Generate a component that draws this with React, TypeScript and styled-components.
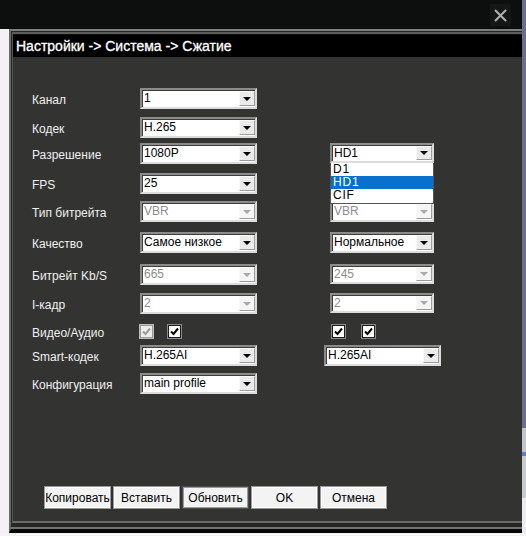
import React from "react";
import styled, { createGlobalStyle } from "styled-components";

const GlobalStyle = createGlobalStyle`
  html, body {
    margin: 0;
    padding: 0;
    background: #f3f1f4;
  }
  body {
    font-family: "Liberation Sans", Arial, sans-serif;
  }
`;

const Screen = styled.div`
  width: 526px;
  height: 536px;
  display: flex;
  flex-direction: column;
  overflow: hidden;
`;

const Upper = styled.div`
  flex: 1;
  display: flex;
  min-height: 0;
`;

const Main = styled.div`
  width: 522px;
  display: flex;
  flex-direction: column;
`;

const SideStrip = styled.div`
  width: 4px;
  background: linear-gradient(
    to bottom,
    #6d6c92 0 428px,
    #c4c4cc 428px 452px,
    #5d7fcc 452px 456px,
    #c9c9d0 456px 498px,
    #ececf0 498px
  );
`;

const BottomStrip = styled.div`
  height: 3px;
  background: #f4f4f4;
`;

const TopBar = styled.div`
  height: 29px;
  background: #0d0f0e;
  display: flex;
  justify-content: flex-end;
  align-items: flex-start;
  padding: 4px 11px 0 0;
  box-sizing: border-box;
`;

const CloseBox = styled.div`
  width: 21px;
  height: 22px;
  background: #151616;
  display: flex;
  align-items: center;
  justify-content: center;
`;

const Workspace = styled.div`
  flex: 1;
  display: flex;
`;

const LeftStrip = styled.div`
  width: 9px;
  background: #f3f1f4;
`;

const Frame = styled.div`
  flex: 1;
  display: flex;
  flex-direction: column;
  border-top: 2px solid #7d7d7d;
  border-left: 2px solid #6a6a6a;
  border-bottom: 4px solid #050505;
  padding: 1px 0 6px 1px;
  background: linear-gradient(to top, #737373 0 2px, #262626 2px);
`;

const Panel = styled.div`
  flex: 1;
  display: flex;
  flex-direction: column;
  border-top: 2px solid #5c5c5c;
  border-left: 1px solid #555;
  border-bottom: 2px solid #686868;
  padding-top: 1px;
  background: #111;
`;

const TitleBar = styled.div`
  height: 22px;
  background: #000;
  color: #fff;
  font-size: 14px;
  line-height: 22px;
  padding-left: 3px;
  white-space: nowrap;
  -webkit-text-stroke: 0.3px #fff;
`;

const Body = styled.div`
  flex: 1;
  display: flex;
  flex-direction: column;
  background: #333432;
  padding: 31px 0 12px 19px;
`;

const Form = styled.div`
  display: grid;
  grid-template-columns: 108px 117px 1fr;
  grid-template-rows: 29px 26px 30px 28px 31px 32px 29px 32px 20px 28px 21px;
  align-items: start;
`;

const Label = styled.div<{ $drop?: number }>`
  color: #efefef;
  font-size: 12px;
  line-height: 21px;
  margin-top: ${(p) => p.$drop ?? 2}px;
  white-space: nowrap;
`;

const Cell = styled.div<{ $offset?: number }>`
  position: relative;
  margin-left: ${(p) => p.$offset ?? 0}px;
`;

const SelectBox = styled.div<{ $w: number; $h?: number }>`
  width: ${(p) => p.$w}px;
  height: ${(p) => p.$h ?? 21}px;
  box-sizing: border-box;
  border: 2px solid;
  border-color: #8c8c8c #dcdcdc #dcdcdc #8c8c8c;
  box-shadow: inset 1px 1px 0 #3c3c3c;
  background: #fff;
  display: flex;
  align-items: stretch;
`;

const SelectValue = styled.span<{ $disabled?: boolean }>`
  flex: 1;
  font-size: 12px;
  line-height: 17px;
  padding-left: 2px;
  color: ${(p) => (p.$disabled ? "#8d8d8d" : "#000")};
  white-space: nowrap;
  overflow: hidden;
`;

const ArrowButton = styled.span<{ $disabled?: boolean }>`
  width: 16px;
  margin: 1px 0;
  box-sizing: border-box;
  border: 1px solid;
  border-color: #f8f8f8 #9c9c9c #9c9c9c #f8f8f8;
  background: ${(p) => (p.$disabled ? "#f5f5f5" : "#ebebeb")};
  display: flex;
  align-items: center;
  justify-content: center;
`;

const Triangle = styled.span<{ $disabled?: boolean }>`
  width: 0;
  height: 0;
  border-left: 4px solid transparent;
  border-right: 4px solid transparent;
  border-top: 4px solid ${(p) => (p.$disabled ? "#a9a9a9" : "#000")};
`;

const OptionList = styled.div`
  position: absolute;
  top: 20px;
  left: 0;
  width: 104px;
  box-sizing: border-box;
  background: #fff;
  border: 1px solid #555;
  border-top: none;
  z-index: 2;
  padding-bottom: 1px;
`;

const Option = styled.div<{ $active?: boolean }>`
  height: 13px;
  line-height: 13px;
  font-size: 12px;
  letter-spacing: 0.8px;
  padding-left: 2px;
  overflow: hidden;
  color: ${(p) => (p.$active ? "#fff" : "#000")};
  background: ${(p) => (p.$active ? "#0b6fce" : "transparent")};
`;

const CheckGroup = styled.div<{ $gap: number }>`
  display: flex;
  gap: ${(p) => p.$gap}px;
`;

const CheckBox = styled.span<{ $disabled?: boolean }>`
  width: 13px;
  height: 13px;
  box-sizing: border-box;
  border: 1px solid ${(p) => (p.$disabled ? "#9a9a9a" : "#1c1c1c")};
  box-shadow: 0 0 0 1px ${(p) => (p.$disabled ? "#bdbdbd" : "#8a8a8a")};
  background: ${(p) => (p.$disabled ? "#ededed" : "#fff")};
  display: flex;
  align-items: center;
  justify-content: center;
`;

const ButtonRow = styled.div`
  margin-top: auto;
  margin-left: 12px;
  display: flex;
  gap: 2px;
`;

const Button = styled.button<{ $focused?: boolean }>`
  width: 67px;
  height: 23px;
  padding: 0;
  font-family: "Liberation Sans", Arial, sans-serif;
  font-size: 12px;
  color: #000;
  background: #f3f3f3;
  border: 1px solid ${(p) => (p.$focused ? "#4c4c4c" : "#9a9a9a")};
  box-shadow: inset 0 0 0 1px ${(p) => (p.$focused ? "#9a9a9a" : "#fdfdfd")};
`;

const Select: React.FC<{
  value: string;
  width?: number;
  height?: number;
  disabled?: boolean;
}> = ({ value, width = 117, height, disabled }) => (
  <SelectBox $w={width} $h={height}>
    <SelectValue $disabled={disabled}>{value}</SelectValue>
    <ArrowButton $disabled={disabled}>
      <Triangle $disabled={disabled} />
    </ArrowButton>
  </SelectBox>
);

const Check: React.FC<{ disabled?: boolean }> = ({ disabled }) => (
  <CheckBox $disabled={disabled}>
    <svg width="9" height="9" viewBox="0 0 9 9">
      <polyline
        points="1,4.5 3.5,7 8,1.5"
        fill="none"
        stroke={disabled ? "#9c9c9c" : "#000"}
        strokeWidth="2"
      />
    </svg>
  </CheckBox>
);

export default function App() {
  return (
    <Screen>
      <GlobalStyle />
      <Upper>
        <Main>
          <TopBar>
            <CloseBox>
              <svg width="13" height="13" viewBox="0 0 13 13">
                <path d="M1 1 L12 12 M12 1 L1 12" stroke="#b0b0b0" strokeWidth="2" />
              </svg>
            </CloseBox>
          </TopBar>
          <Workspace>
            <LeftStrip />
            <Frame>
              <Panel>
                <TitleBar>Настройки -&gt; Система -&gt; Сжатие</TitleBar>
                <Body>
                  <Form>
                    <Label>Канал</Label>
                    <Select value="1" />
                    <Cell />

                    <Label>Кодек</Label>
                    <Select value="H.265" />
                    <Cell />

                    <Label>Разрешение</Label>
                    <Select value="1080P" />
                    <Cell $offset={73}>
                      <Select value="HD1" width={104} height={20} />
                      <OptionList>
                        <Option>D1</Option>
                        <Option $active>HD1</Option>
                        <Option>CIF</Option>
                      </OptionList>
                    </Cell>

                    <Label>FPS</Label>
                    <Select value="25" />
                    <Cell />

                    <Label>Тип битрейта</Label>
                    <Select value="VBR" disabled />
                    <Cell $offset={73}>
                      <Select value="VBR" width={104} disabled />
                    </Cell>

                    <Label>Качество</Label>
                    <Select value="Самое низкое" />
                    <Cell $offset={73}>
                      <Select value="Нормальное" width={104} />
                    </Cell>

                    <Label>Битрейт Kb/S</Label>
                    <Select value="665" disabled />
                    <Cell $offset={73}>
                      <Select value="245" width={104} height={20} disabled />
                    </Cell>

                    <Label>I-кадр</Label>
                    <Select value="2" disabled />
                    <Cell $offset={73}>
                      <Select value="2" width={104} height={20} disabled />
                    </Cell>

                    <Label $drop={-2}>Видео/Аудио</Label>
                    <CheckGroup $gap={15}>
                      <Check disabled />
                      <Check />
                    </CheckGroup>
                    <Cell $offset={75}>
                      <CheckGroup $gap={17}>
                        <Check />
                        <Check />
                      </CheckGroup>
                    </Cell>

                    <Label>Smart-кодек</Label>
                    <Select value="H.265AI" />
                    <Cell $offset={67}>
                      <Select value="H.265AI" />
                    </Cell>

                    <Label>Конфигурация</Label>
                    <Select value="main profile" />
                    <Cell />
                  </Form>
                  <ButtonRow>
                    <Button>Копировать</Button>
                    <Button>Вставить</Button>
                    <Button $focused>Обновить</Button>
                    <Button>OK</Button>
                    <Button>Отмена</Button>
                  </ButtonRow>
                </Body>
              </Panel>
            </Frame>
          </Workspace>
        </Main>
        <SideStrip />
      </Upper>
      <BottomStrip />
    </Screen>
  );
}
